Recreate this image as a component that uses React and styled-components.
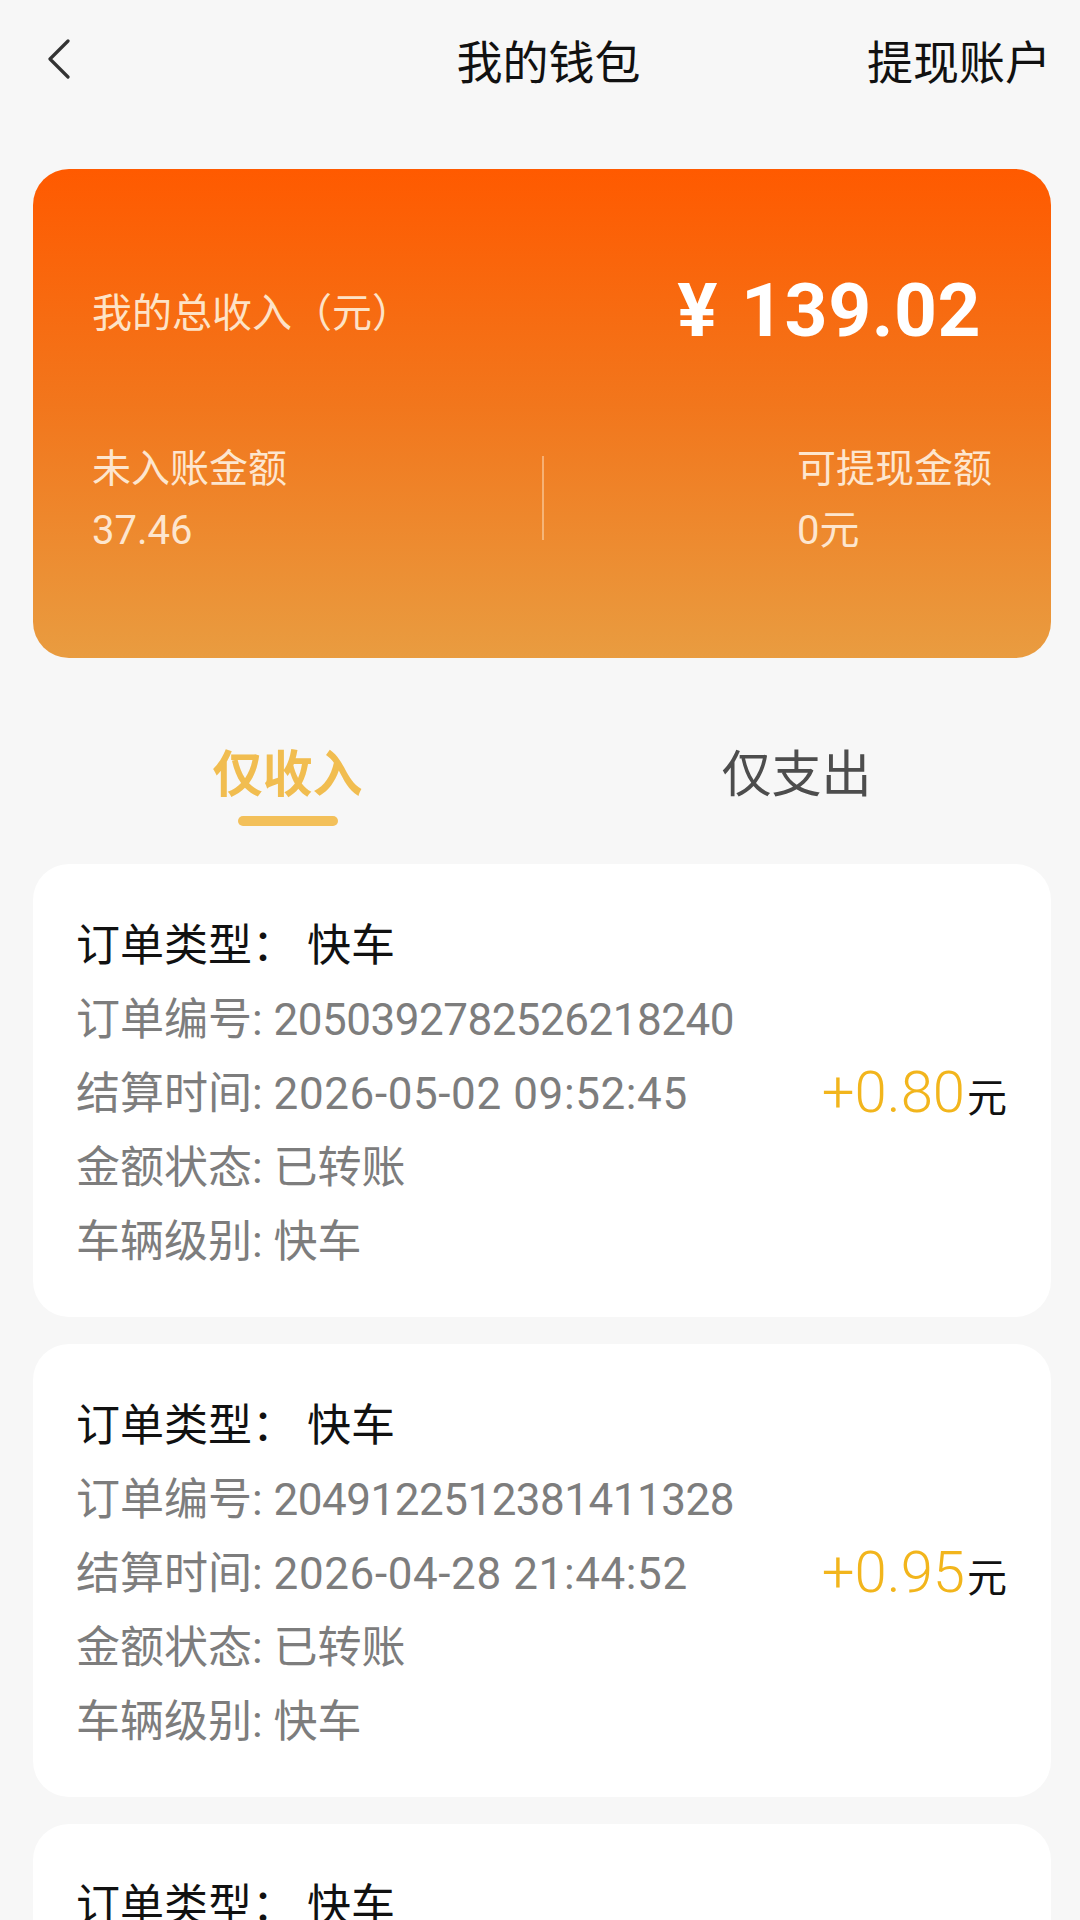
import styled, { createGlobalStyle } from 'styled-components';

const GlobalStyle = createGlobalStyle`
	html, body {
		margin: 0;
		padding: 0;
		background: #f7f7f7;
	}
	body {
		font-family: Roboto, "Noto Sans CJK SC", sans-serif;
		-webkit-font-smoothing: antialiased;
	}
`;

const orders = [
	{
		id: '2050392782526218240',
		time: '2026-05-02 09:52:45',
		amount: '+0.80',
	},
	{
		id: '2049122512381411328',
		time: '2026-04-28 21:44:52',
		amount: '+0.95',
	},
	{
		id: '2048113654021790352',
		time: '2026-04-26 18:20:31',
		amount: '+1.12',
	},
];

const Page = styled.div`
	width: 1080px;
	min-height: 1920px;
	background: #f7f7f7;
	overflow: hidden;
`;

const Header = styled.header`
	height: 118px;
	padding: 0 29px 0 46px;
	display: grid;
	grid-template-columns: 1fr auto 1fr;
	align-items: center;
	font-family: "Noto Sans CJK SC", sans-serif;
	font-size: 46px;
	color: #111;
`;

const BackButton = styled.button`
	justify-self: start;
	border: none;
	background: none;
	padding: 0;
	display: flex;
	cursor: pointer;
`;

const Title = styled.h1`
	margin: 0;
	font-size: 46px;
	font-weight: 400;
	line-height: 1;
`;

const HeaderLink = styled.span`
	justify-self: end;
	line-height: 1;
`;

const Content = styled.main`
	padding: 51px 29px 0 33px;
`;

const SummaryCard = styled.section`
	height: 489px;
	box-sizing: border-box;
	padding: 100px 58px 0 59px;
	border-radius: 36px;
	background: linear-gradient(180deg, #ff5a00 0%, #f2761c 48%, #e99c40 100%);
	display: flex;
	flex-direction: column;
`;

const TotalRow = styled.div`
	height: 82px;
	display: flex;
	align-items: center;
	justify-content: space-between;
	padding-right: 12px;
`;

const TotalLabel = styled.span`
	font-family: "Noto Sans CJK SC", sans-serif;
	font-size: 40px;
	color: #fde3c7;
`;

const TotalAmount = styled.span`
	font-family: Roboto, sans-serif;
	font-size: 75px;
	font-weight: 700;
	color: #fff;
	letter-spacing: 0.5px;
	word-spacing: 4px;
`;

const StatsRow = styled.div`
	margin-top: 82px;
	display: flex;
	justify-content: space-between;
	align-items: center;
`;

const Stat = styled.div`
	display: flex;
	flex-direction: column;
	min-width: 196px;
	color: #fde6cf;
	line-height: 65px;
`;

const StatLabel = styled.span`
	font-family: "Noto Sans CJK SC", sans-serif;
	font-size: 39px;
`;

const StatValue = styled.span`
	font-size: 40px;
`;

const Divider = styled.div`
	width: 2px;
	height: 84px;
	background: rgba(255, 236, 210, 0.45);
`;

const TabBar = styled.nav`
	display: flex;
	padding-top: 85px;
	margin-bottom: 38px;
`;

const Tab = styled.div`
	flex: 1;
	display: flex;
	flex-direction: column;
	align-items: center;
	font-family: "Noto Sans CJK SC", sans-serif;
	font-size: 50px;
	line-height: 54px;
	font-weight: ${(p) => (p.$active ? 700 : 400)};
	color: ${(p) => (p.$active ? '#f1bd50' : '#4d4d4d')};

	&::after {
		content: '';
		margin-top: 19px;
		width: 100px;
		height: 10px;
		border-radius: 5px;
		background: ${(p) => (p.$active ? '#f3c05a' : 'transparent')};
	}
`;

const OrderList = styled.div`
	display: flex;
	flex-direction: column;
	gap: 27px;
`;

const OrderCard = styled.article`
	background: #fff;
	border-radius: 36px;
	padding: 45px 44px 38px 43px;
	display: flex;
	align-items: center;
	justify-content: space-between;
`;

const Lines = styled.div`
	display: flex;
	flex-direction: column;
`;

const Line = styled.div`
	font-size: 44px;
	line-height: 74px;
	color: ${(p) => (p.$strong ? '#111' : '#7d7d7d')};
	white-space: nowrap;
`;

const Digits = styled.span`
	letter-spacing: ${(p) => p.$spacing || '0'};
`;

const Amount = styled.div`
	display: flex;
	align-items: baseline;
	margin-bottom: 4px;
`;

const AmountValue = styled.span`
	font-family: Roboto, sans-serif;
	font-size: 58px;
	font-weight: 300;
	color: #f2b51c;
`;

const AmountUnit = styled.span`
	font-family: "Noto Sans CJK SC", sans-serif;
	font-size: 40px;
	color: #111;
	margin-left: 2px;
`;

const BackIcon = () => (
	<svg width="26" height="40" viewBox="0 0 26 40" fill="none">
		<path
			d="M22 2 L4 20 L22 38"
			stroke="#333"
			strokeWidth="3.2"
			strokeLinecap="round"
			strokeLinejoin="round"
		/>
	</svg>
);

export default function App() {
	return (
		<Page>
			<GlobalStyle />
			<Header>
				<BackButton aria-label="返回">
					<BackIcon />
				</BackButton>
				<Title>我的钱包</Title>
				<HeaderLink>提现账户</HeaderLink>
			</Header>

			<Content>
				<SummaryCard>
					<TotalRow>
						<TotalLabel>我的总收入（元）</TotalLabel>
						<TotalAmount>¥ 139.02</TotalAmount>
					</TotalRow>
					<StatsRow>
						<Stat>
							<StatLabel>未入账金额</StatLabel>
							<StatValue>37.46</StatValue>
						</Stat>
						<Divider />
						<Stat>
							<StatLabel>可提现金额</StatLabel>
							<StatValue>0元</StatValue>
						</Stat>
					</StatsRow>
				</SummaryCard>

				<TabBar>
					<Tab $active>仅收入</Tab>
					<Tab>仅支出</Tab>
				</TabBar>

				<OrderList>
					{orders.map((o) => (
						<OrderCard key={o.id}>
							<Lines>
								<Line $strong>订单类型： 快车</Line>
								<Line>
									订单编号: <Digits $spacing="-0.5px">{o.id}</Digits>
								</Line>
								<Line>
									结算时间: <Digits $spacing="0.6px">{o.time}</Digits>
								</Line>
								<Line>金额状态: 已转账</Line>
								<Line>车辆级别: 快车</Line>
							</Lines>
							<Amount>
								<AmountValue>{o.amount}</AmountValue>
								<AmountUnit>元</AmountUnit>
							</Amount>
						</OrderCard>
					))}
				</OrderList>
			</Content>
		</Page>
	);
}
